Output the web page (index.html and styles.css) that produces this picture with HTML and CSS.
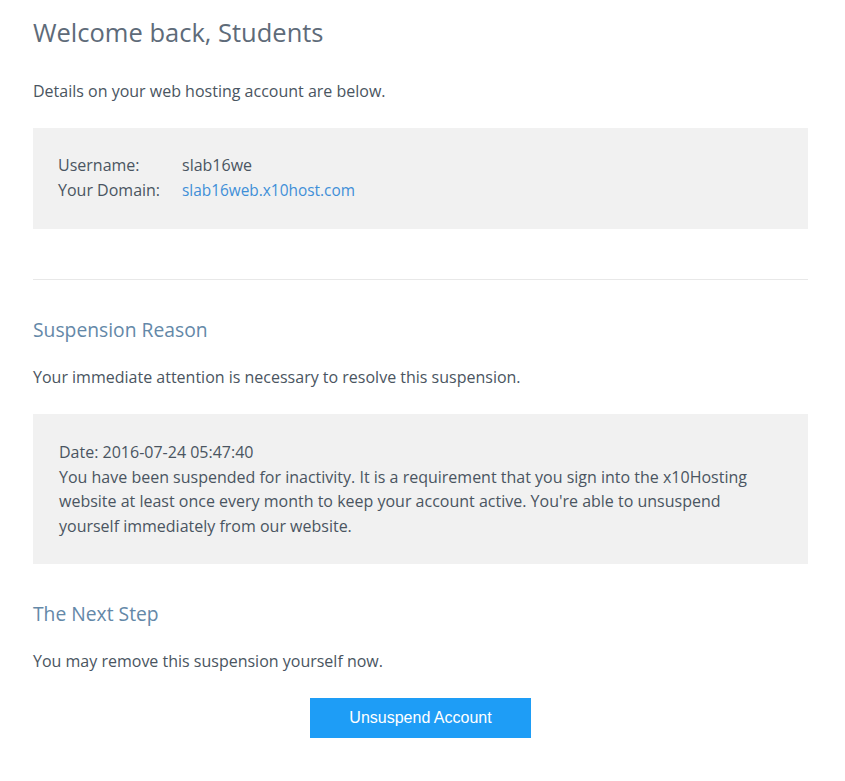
FILE: index.html
```html
<!DOCTYPE html>
<html>
<head>
<meta charset="utf-8">
<link rel="stylesheet" href="styles.css">
</head>
<body>
<div class="page">
  <h1 class="title">Welcome back, Students</h1>
  <p class="text intro">Details on your web hosting account are below.</p>
  <div class="box account">
    <div class="row"><span class="label">Username:</span><span>slab16we</span></div>
    <div class="row"><span class="label">Your Domain:</span><a class="link" href="#">slab16web.x10host.com</a></div>
  </div>
  <hr class="divider">
  <h2 class="subtitle first">Suspension Reason</h2>
  <p class="text">Your immediate attention is necessary to resolve this suspension.</p>
  <div class="box reason">
    <div>Date: 2016-07-24 05:47:40</div>
    <div>You have been suspended for inactivity. It is a requirement that you sign into the x10Hosting website at least once every month to keep your account active. You're able to unsuspend yourself immediately from our website.</div>
  </div>
  <h2 class="subtitle">The Next Step</h2>
  <p class="text">You may remove this suspension yourself now.</p>
  <div class="actions">
    <a class="button" href="#">Unsuspend Account</a>
  </div>
</div>
</body>
</html>
```
FILE: styles.css
```css
html, body {
  margin: 0;
  padding: 0;
  background: #ffffff;
}
body {
  font-family: "Open Sans", "DejaVu Sans", sans-serif;
  font-size: 16px;
  color: #4a5561;
}
.page {
  width: 775px;
  padding: 16px 0 40px 33px;
}
.title {
  margin: 0;
  font-size: 25.5px;
  font-weight: 400;
  line-height: 32px;
  color: #5e6b79;
}
.text {
  margin: 0;
  line-height: 24px;
}
.intro {
  margin-top: 31px;
}
.box {
  background: #f1f1f1;
  padding: 25px 25px;
  line-height: 24.5px;
}
.account {
  margin-top: 25px;
  padding: 25px 25px 26px;
  line-height: 25px;
}
.row {
  display: flex;
}
.label {
  width: 124px;
  flex: none;
}
.link {
  color: #3f8fd8;
  text-decoration: none;
  font-size: 15.4px;
}
.divider {
  margin: 50px 0 0;
  border: 0;
  border-top: 1px solid #e8e8e8;
  height: 0;
}
.subtitle {
  margin: 37px 0 0;
  font-size: 19.3px;
  font-weight: 400;
  line-height: 26px;
  color: #6488a8;
}
.subtitle + .text {
  margin-top: 22px;
}
.reason {
  margin-top: 25px;
  padding: 26px 26px 26px 26px;
}
.reason + .subtitle {
  margin-top: 37px;
}
.actions {
  display: flex;
  justify-content: center;
  margin-top: 25px;
}
.button {
  display: block;
  width: 221px;
  height: 40px;
  line-height: 40px;
  text-align: center;
  background: #1e9df6;
  color: #ffffff;
  text-decoration: none;
  font-family: "Liberation Sans", Arial, sans-serif;
  font-size: 16px;
}
```
